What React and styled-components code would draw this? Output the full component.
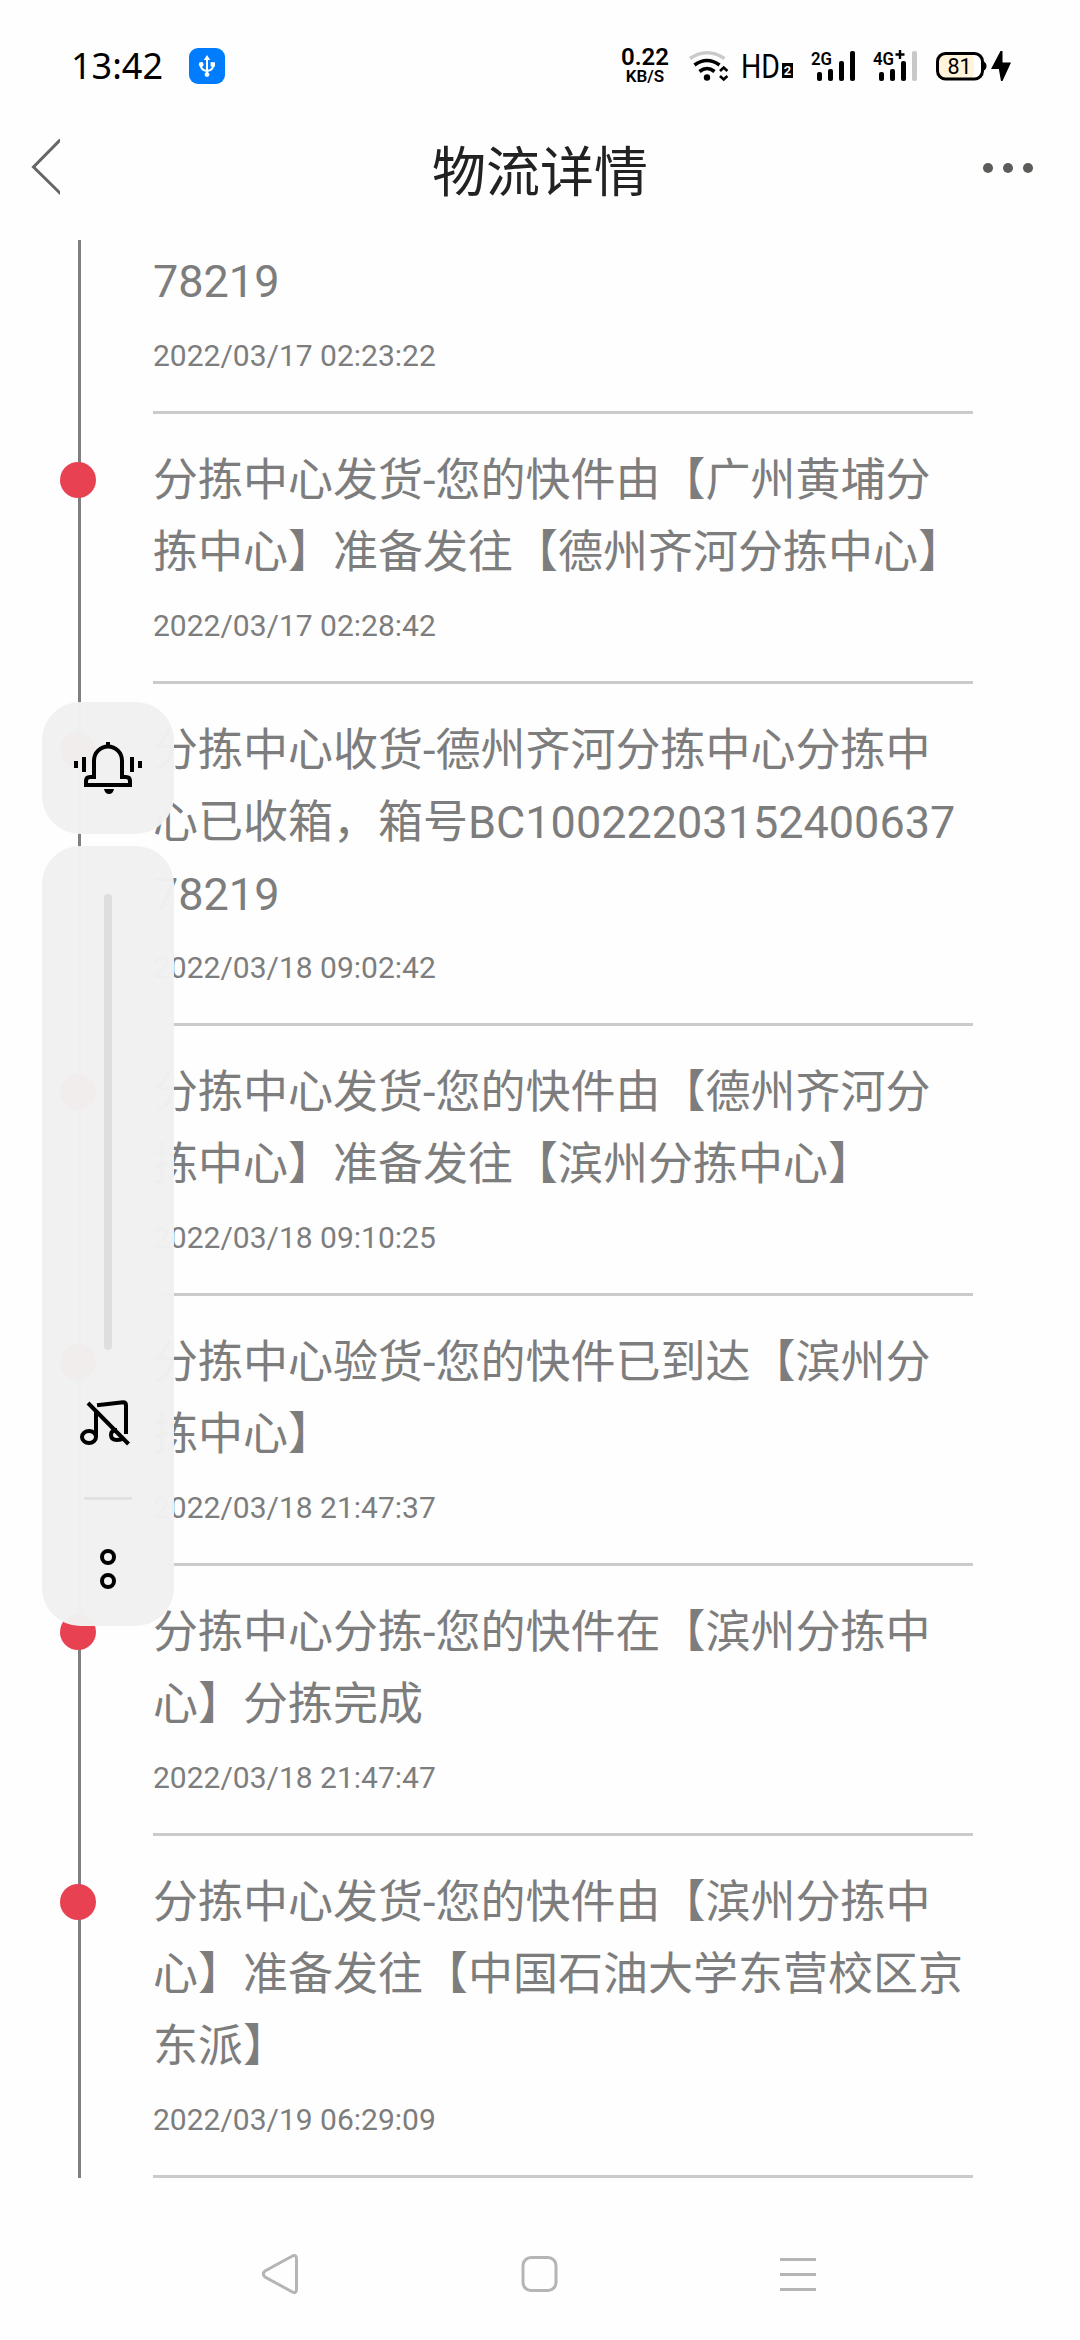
import React from 'react';
import styled, { createGlobalStyle } from 'styled-components';

const GlobalStyle = createGlobalStyle`

    * {
        box-sizing: border-box;
        margin: 0;
        padding: 0;
    }

    body {
        background: #fefefe;
        font-family: Roboto, "Noto Sans CJK SC", sans-serif;
    }

`;

const Screen = styled.div`

    display: flex;
    flex-direction: column;
    width: 1080px;
    height: 2340px;
    overflow: hidden;
    background: #fefefe;

`;

const StatusBar = styled.div`

    display: flex;
    align-items: center;
    height: 102px;
    padding: 30px 69px 0 71px;

`;

const Clock = styled.span`

    width: 118px;
    font-family: "Noto Sans", sans-serif;
    font-size: 36px;
    line-height: 40px;
    color: #000;

`;

const UsbBadge = styled.div`

    width: 36px;
    height: 36px;
    border-radius: 9px;
    background: #007dfe;

`;

const StatusIcons = styled.div`

    display: flex;
    align-items: center;
    margin-left: auto;

    &>svg {
        display: block;
    }

`;

const Speed = styled.div`

    display: flex;
    flex-direction: column;
    align-items: center;
    width: 50px;
    margin-right: 19px;
    font-weight: 600;
    color: #000;

`;

const SpeedValue = styled.span`

    font-size: 24px;
    line-height: 21px;

`;

const SpeedUnit = styled.span`

    font-size: 17px;
    line-height: 17px;

`;

const Icon = styled.svg`

    margin-left: ${props => props.$gap || 0}px;
    overflow: visible;

`;

const Header = styled.div`

    display: grid;
    grid-template-columns: 120px 1fr 120px;
    align-items: center;
    height: 138px;

`;

const Title = styled.h1`

    padding-top: 5px;
    text-align: center;
    font-size: 54px;
    font-weight: 400;
    line-height: 80px;
    color: #222;

`;

const BackIcon = styled.svg`

    margin: -9px 0 0 30px;

`;

const More = styled.div`

    display: flex;
    gap: 10px;
    margin: -7px 0 0 23px;

    &>i {
        width: 10px;
        height: 10px;
        border-radius: 50%;
        background: #5c5c58;
    }

`;

const Timeline = styled.div`

    flex: none;
    height: 1938px;
    margin: 0 107px 0 78px;
    border-left: 3px solid #808080;

`;

const Event = styled.div`

    position: relative;
    margin-left: 72px;
    padding-top: ${props => props.$cut ? 6 : 31}px;
    border-bottom: 3px solid #cbcbcb;

`;

const Dot = styled.span`

    position: absolute;
    top: 48px;
    left: -93px;
    width: 36px;
    height: 36px;
    border-radius: 50%;
    background: #e84152;

`;

const Message = styled.p`

    font-size: 45px;
    line-height: 72px;
    white-space: pre;
    text-spacing-trim: space-all;
    color: #7d7d7d;

`;

const Time = styled.p`

    height: ${props => props.$cut ? 93 : 92}px;
    padding-top: ${props => props.$cut ? 20 : 19}px;
    font-size: 30px;
    line-height: 36px;
    color: #7d7d7d;

`;

const VolumePanel = styled.div`

    position: absolute;
    top: 702px;
    left: 42px;
    display: flex;
    flex-direction: column;
    gap: 12px;

`;

const PanelCard = styled.div`

    display: flex;
    flex-direction: column;
    align-items: center;
    width: 132px;
    height: ${props => props.$height}px;
    padding-top: ${props => props.$top}px;
    border-radius: 38px;
    background: rgba(241, 241, 241, 0.98);

`;

const Track = styled.div`

    width: 8px;
    height: 456px;
    border-radius: 4px;
    background: #dedede;

`;

const MusicIcon = styled.svg`

    margin: 48px 6px 0 0;

`;

const Separator = styled.div`

    width: 48px;
    height: 3px;
    margin: 49px 0;
    background: #e2e2e2;

`;

const NavBar = styled.div`

    display: flex;
    justify-content: space-between;
    margin: 74px 262px 0 260px;

`;

const events = [
    { message: '78219', time: '2022/03/17 02:23:22', cut: true },
    { message: '分拣中心发货-您的快件由【广州黄埔分\n拣中心】准备发往【德州齐河分拣中心】', time: '2022/03/17 02:28:42' },
    { message: '分拣中心收货-德州齐河分拣中心分拣中\n心已收箱，箱号BC10022203152400637\n78219', time: '2022/03/18 09:02:42' },
    { message: '分拣中心发货-您的快件由【德州齐河分\n拣中心】准备发往【滨州分拣中心】', time: '2022/03/18 09:10:25' },
    { message: '分拣中心验货-您的快件已到达【滨州分\n拣中心】', time: '2022/03/18 21:47:37' },
    { message: '分拣中心分拣-您的快件在【滨州分拣中\n心】分拣完成', time: '2022/03/18 21:47:47' },
    { message: '分拣中心发货-您的快件由【滨州分拣中\n心】准备发往【中国石油大学东营校区京\n东派】', time: '2022/03/19 06:29:09' },
];

const Signal = ({ label, gap, plus, weak }) => (
    <Icon $gap={gap} width="45" height="30" viewBox="0 0 45 30">
        <text x="0" y="14" fontSize="19" fontWeight="600" textLength="21" lengthAdjust="spacingAndGlyphs">{label}</text>
        {plus && <path d="M22.5 3.5h9M27 -1v9" stroke="#000" strokeWidth="2.4" />}
        <rect x="6" y="21" width="5" height="9" rx="2" />
        <rect x="17" y="18" width="5" height="12" rx="2" />
        <rect x="28" y="10" width="5" height="20" rx="2" />
        <rect x="39" y="0" width="5" height="30" rx="2" fill={weak ? '#c8c8c8' : '#000'} />
    </Icon>
);

const App = () => {
    return (
        <Screen>

            <GlobalStyle />

            <StatusBar>
                <Clock>13:42</Clock>
                <UsbBadge>
                    <svg width="36" height="36" viewBox="0 0 36 36" fill="none" stroke="#fff" strokeWidth="2">
                        <path d="M18 10v17M12 17v1q0 4 6 5q6 -1 6 -5v-1" />
                        <path d="M18 7l3.2 5h-6.4z" fill="#fff" stroke="none" />
                        <circle cx="12.2" cy="16.5" r="2.4" fill="#fff" stroke="none" />
                        <rect x="21.6" y="14.2" width="4.4" height="4.4" fill="#fff" stroke="none" />
                        <circle cx="18" cy="26.6" r="2.4" fill="#fff" stroke="none" />
                    </svg>
                </UsbBadge>

                <StatusIcons>
                    <Speed>
                        <SpeedValue>0.22</SpeedValue>
                        <SpeedUnit>KB/S</SpeedUnit>
                    </Speed>

                    {/* wifi */}
                    <Icon width="40" height="30" viewBox="0 0 40 30" fill="none" stroke="#000" strokeWidth="3.6">
                        <path d="M1 7.5Q18 -4 35.5 7.5" stroke="#cacaca" />
                        <path d="M5.5 14Q18 5 30.5 14" />
                        <path d="M10.5 20.5Q18 14.5 25.5 20.5" />
                        <circle cx="18" cy="26.5" r="3.2" fill="#000" stroke="none" />
                        <path d="M31 20l3.7 -3.5l3.7 3.5M31 25l3.7 3.5l3.7 -3.5" strokeWidth="2.6" />
                    </Icon>

                    {/* HD on the second sim */}
                    <Icon $gap={14} width="50" height="30" viewBox="0 0 50 30">
                        <text x="-2" y="27" fontSize="34" textLength="39" lengthAdjust="spacingAndGlyphs">HD</text>
                        <rect x="39" y="12" width="11" height="15" />
                        <text x="44.5" y="24" fontSize="13" fontWeight="700" textAnchor="middle" fill="#fff">2</text>
                    </Icon>

                    <Signal label="2G" gap={18} />
                    <Signal label="4G" gap={17} plus weak />

                    {/* battery */}
                    <Icon $gap={18} width="51" height="30" viewBox="0 0 51 30">
                        <rect x="3" y="3" width="35" height="25" rx="6" fill="#fff3da" />
                        <rect x="1.5" y="2.5" width="45" height="25.5" rx="8" fill="none" stroke="#000" strokeWidth="3" />
                        <path d="M47 10q3.5 1.5 3.5 5t-3.5 5z" />
                        <text x="23.5" y="22.500" fontSize="21.500" textAnchor="middle">81</text>
                    </Icon>
                    <Icon $gap={4} width="20" height="30" viewBox="0 0 20 30">
                        <path d="M9.5 0L0 18h8v1L10 30h1.5L20 11.5h-8.5V0z" />
                    </Icon>
                </StatusIcons>
            </StatusBar>

            <Header>
                <BackIcon width="30" height="56" viewBox="0 0 30 56" fill="none" stroke="#666" strokeWidth="3">
                    <path d="M32 -1L3.5 28L32 56" />
                </BackIcon>
                <Title>物流详情</Title>
                <More><i /><i /><i /></More>
            </Header>

            <Timeline>
                {events.map(event => (
                    <Event key={event.time} $cut={event.cut}>
                        {!event.cut && <Dot />}
                        <Message>{event.message}</Message>
                        <Time $cut={event.cut}>{event.time}</Time>
                    </Event>
                ))}
            </Timeline>

            {/* system volume overlay */}
            <VolumePanel>
                <PanelCard $height={132} $top={40}>
                    <svg width="68" height="52" viewBox="0 0 68 52" fill="none" stroke="#000" strokeWidth="4">
                        <path d="M34 0v4M20 37V18.5a14 14 0 0 1 28 0V35h4q4 0 4 4v4H12v-4q0 -4 4 -4h6" />
                        <path d="M10 15v15M58 15v15" />
                        <path d="M2 19v7M66 19v7" />
                        <path d="M30 47h10q-1 5 -5 5t-5 -5z" fill="#000" stroke="none" />
                    </svg>
                </PanelCard>
                <PanelCard $height={780} $top={48}>
                    <Track />
                    <MusicIcon width="54" height="50" viewBox="0 0 54 50" fill="none" stroke="#000" strokeWidth="4">
                        <ellipse cx="11" cy="39" rx="7" ry="6" />
                        <path d="M18 39V14" />
                        <path d="M19 7.2L45 4.2q3 0 3 3V36" />
                        <path d="M39 32q-6 0 -6 5t6 5q4 0 6 -2" />
                        <path d="M10 5L50.5 46" />
                    </MusicIcon>
                    <Separator />
                    <svg width="16" height="40" viewBox="0 0 16 40" fill="none" stroke="#000" strokeWidth="4">
                        <circle cx="8" cy="8" r="6" />
                        <circle cx="8" cy="32" r="6" />
                    </svg>
                </PanelCard>
            </VolumePanel>

            <NavBar>
                <svg width="40" height="44" viewBox="0 0 40 44" fill="none" stroke="#b5b5b5" strokeWidth="3">
                    <path d="M31.5 4.5Q36.5 1.5 36.5 7V37Q36.5 42.5 31.5 39.5L5 25Q1.5 22 5 19z" />
                </svg>
                <svg width="40" height="44" viewBox="0 0 40 44" fill="none" stroke="#b5b5b5" strokeWidth="3">
                    <rect x="3" y="5.5" width="33" height="33" rx="8" />
                </svg>
                <svg width="38" height="44" viewBox="0 0 38 44" fill="none" stroke="#b5b5b5" strokeWidth="3">
                    <path d="M0 7.5h36M0 22.5h36M0 37.5h36" />
                </svg>
            </NavBar>
        </Screen>
    )
}

export default App;
